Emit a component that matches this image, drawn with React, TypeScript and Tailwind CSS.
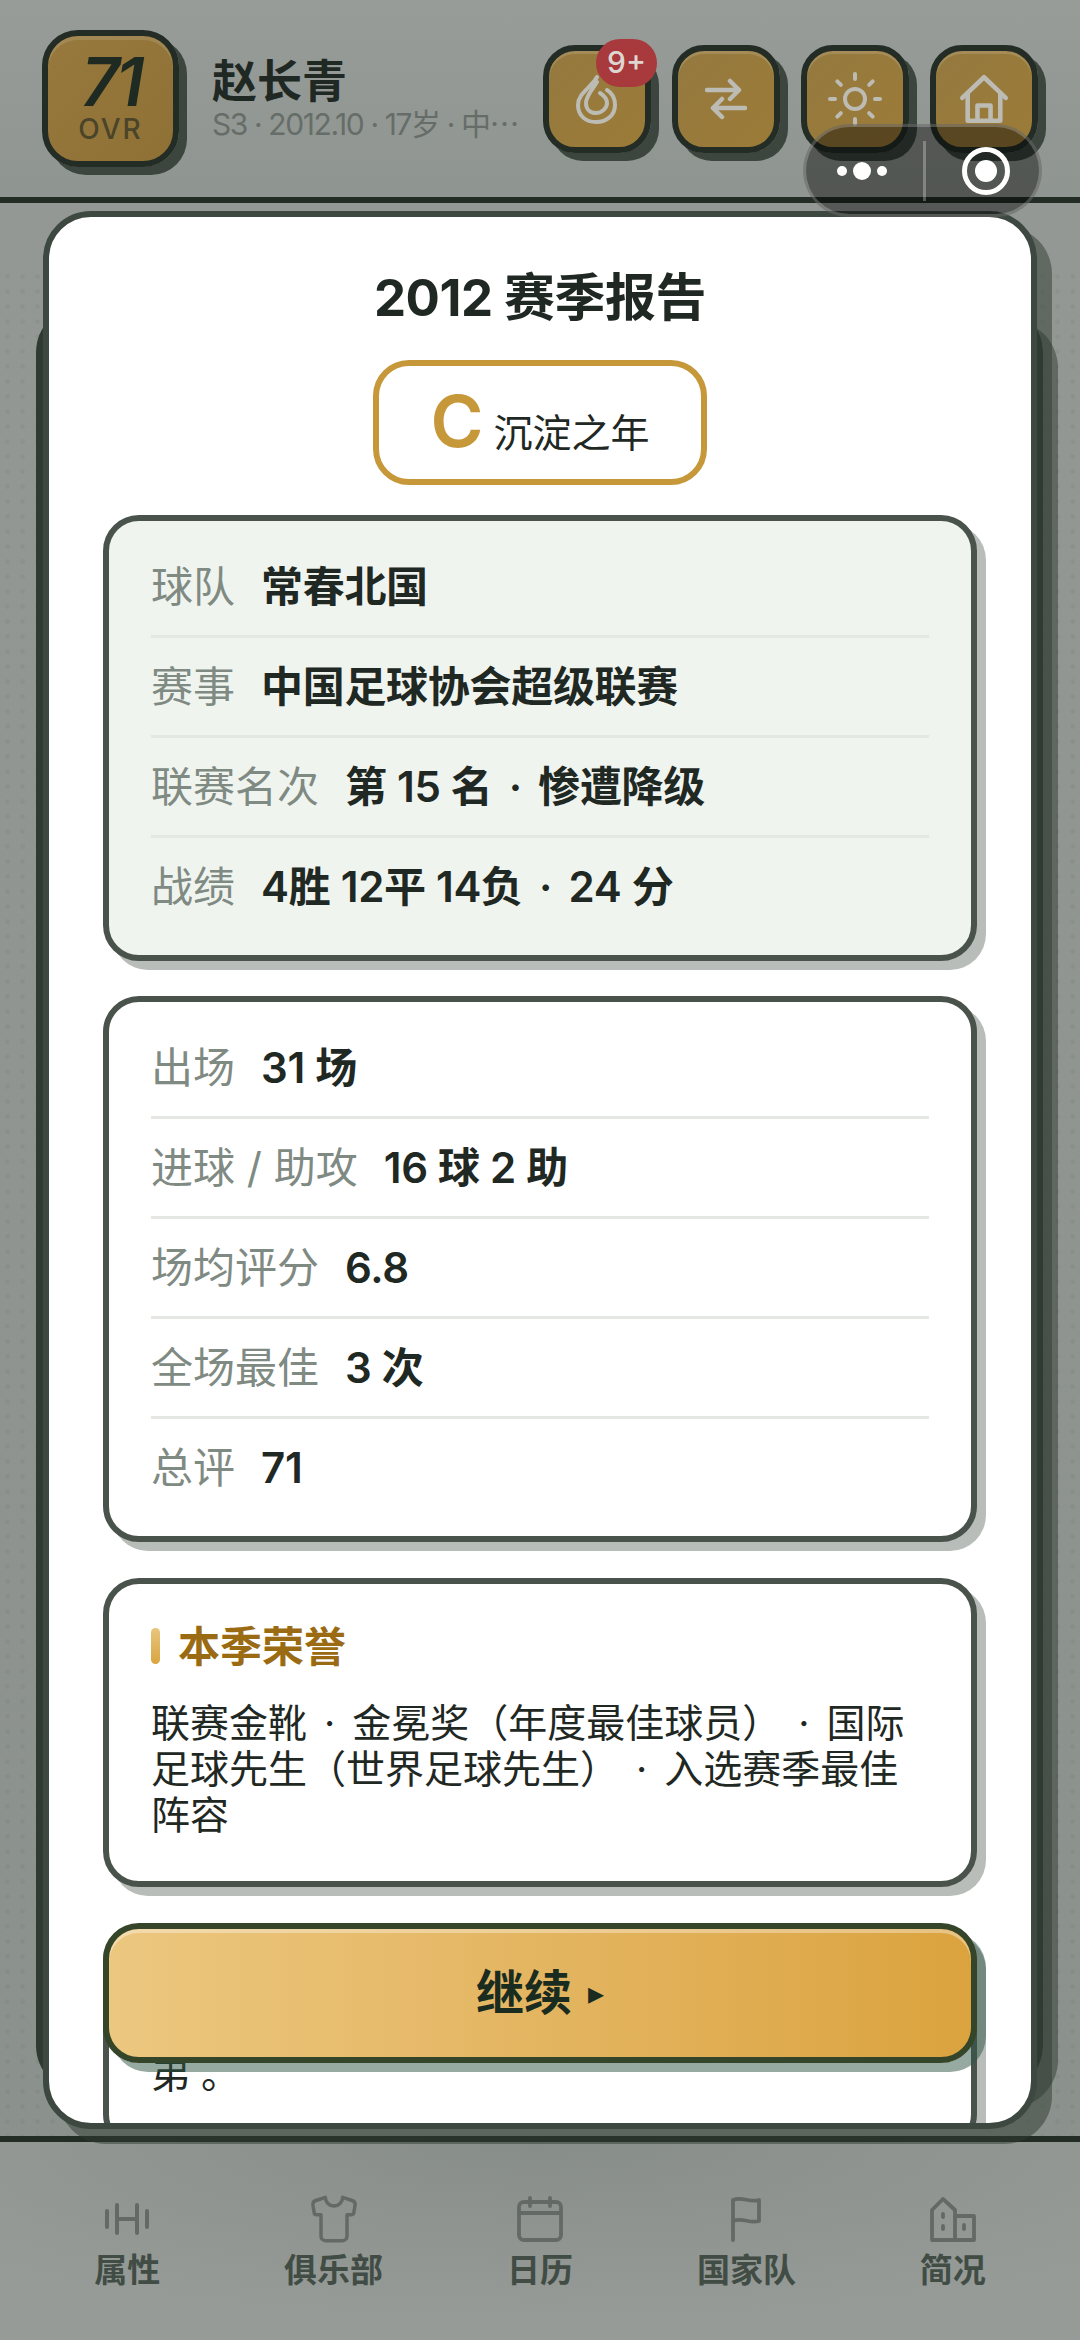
import React from "react";
import { Sun, Shirt } from "lucide-react";

const FONT = "font-['Inter','Noto_Sans_CJK_SC',sans-serif]";

function Dot() {
  return <span className="mx-[6px]">·</span>;
}

function Row({ label, value, last }: { label: string; value: React.ReactNode; last?: boolean }) {
  return (
    <div className={`flex items-center h-[100px] gap-[26px] ${last ? "pb-[3px]" : "border-b-[3px] border-[#e5e8e2]"}`}>
      <span className="text-[42px] text-[#7f8a83] whitespace-nowrap">{label}</span>
      <span className="text-[42px] font-semibold tracking-[-0.3px] text-[#1f2823] whitespace-nowrap">{value}</span>
    </div>
  );
}

function IconButton({ children, badge }: { children: React.ReactNode; badge?: string }) {
  return (
    <div className="relative w-[108px] h-[108px] rounded-[32px] border-[6px] border-[#232d25] bg-gradient-to-br from-[#94793f] to-[#9c7b37] shadow-[8px_8px_0_#3c463f,inset_0_3px_0_rgba(255,255,255,0.14)] flex items-center justify-center text-[#bcbcb4]">
      {children}
      {badge && (
        <span className="absolute left-[47px] top-[-12px] w-[61px] h-[48px] rounded-[24px] bg-[#a8393c] text-[#ddd6d2] text-[30px] font-medium flex items-center justify-center">
          {badge}
        </span>
      )}
    </div>
  );
}

function NavItem({ icon, label }: { icon: React.ReactNode; label: string }) {
  return (
    <div className="flex flex-col items-center">
      <div className="h-[48px] flex items-center justify-center text-[#636a65]">{icon}</div>
      <span className="mt-[4px] text-[33px] leading-[46px] font-bold text-[#414c45]">{label}</span>
    </div>
  );
}

export default function App() {
  return (
    <div className={`relative w-[1080px] h-[2340px] overflow-hidden bg-[#969b97] ${FONT}`}>
      <div className="flex flex-col h-full">
        {/* Header */}
        <header className="h-[203px] shrink-0 border-b-[6px] border-[#232d25] px-[42px] flex items-center bg-gradient-to-b from-[#979c98] to-[#8f9590]">
          <div className="w-[137px] h-[137px] rounded-[36px] border-[6px] border-[#232d25] bg-gradient-to-br from-[#97793d] to-[#8f7136] shadow-[8px_8px_0_#3c463f,inset_0_4px_0_rgba(255,255,255,0.12)] flex flex-col items-center justify-center text-[#1f2a22]">
            <span className="text-[67px] leading-[58px] font-semibold italic tracking-[-4px]">71</span>
            <span className="text-[28px] leading-[32px] mt-[2px] tracking-[2px] font-medium text-[#4a4429]">OVR</span>
          </div>
          <div className="ml-[33px] w-[320px] flex flex-col">
            <span className="text-[45px] leading-[54px] font-bold text-[#1f2823]">赵长青</span>
            <span className="text-[30px] leading-[38px] mt-[-6px] text-[#666d68] tracking-[-1.4px] whitespace-nowrap">
              S3 · 2012.10 · 17岁 · 中<span className="font-['Noto_Sans_CJK_SC',sans-serif] tracking-[0px]">…</span>
            </span>
          </div>
          <div className="ml-auto flex gap-[21px]">
            <IconButton badge="9+">
              <svg width="54" height="78" viewBox="0 0 54 78" fill="none" stroke="currentColor" strokeWidth="4" strokeLinecap="round">
                <path d="M27 17 C22 27 8 33 8 45 C8 56 16 62 26 62 C37 62 45 55 45 45 C45 39 42 33 37 30" />
                <path d="M27 22 C22 30 16 36 16 43 C16 49 20 53 26 53 C32 53 37 48 37 43 C37 38 33 35 30 33" />
              </svg>
            </IconButton>
            <IconButton>
              <svg width="42" height="42" viewBox="0 0 42 42" fill="none" stroke="currentColor" strokeWidth="4.5" strokeLinecap="round" strokeLinejoin="round">
                <path d="M2 12 H34 M25 3 L34 12 L25 21" />
                <path d="M40 30 H8 M17 21 L8 30 L17 39" />
              </svg>
            </IconButton>
            <IconButton>
              <Sun size={60} strokeWidth={1.6} />
            </IconButton>
            <IconButton>
              <svg width="50" height="50" viewBox="0 0 46 46" fill="none" stroke="currentColor" strokeWidth="4.2" strokeLinecap="round" strokeLinejoin="round">
                <path d="M3 22 L23 3 L43 22" />
                <path d="M8 18 V43 H38 V18" />
                <path d="M17 43 V29 H29 V43" />
              </svg>
            </IconButton>
          </div>
        </header>

        {/* Page area with a faint dot texture */}
        <main className="flex-1 flex flex-col pt-[66px] bg-gradient-to-b from-[#939894] to-[#8b918c]">
          <div className="flex-1 bg-[radial-gradient(rgba(60,70,64,0.07)_2px,transparent_2.5px)] bg-[length:15px_15px]" />
        </main>

        {/* Bottom nav */}
        <nav className="h-[204px] shrink-0 border-t-[6px] border-[#232d25] grid grid-cols-5 px-[24px] pt-[53px] bg-[#969b97] bg-[radial-gradient(ellipse_70%_90%_at_50%_0%,#878d88,#969b97)]">
          <NavItem
            label="属性"
            icon={
              <svg width="44" height="32" viewBox="0 0 44 32" fill="none" stroke="currentColor" strokeWidth="4" strokeLinecap="round">
                <path d="M2 8 V24 M12 2 V30 M32 2 V30 M42 8 V24 M12 16 H32" />
              </svg>
            }
          />
          <NavItem label="俱乐部" icon={<Shirt size={52} strokeWidth={1.6} />} />
          <NavItem
            label="日历"
            icon={
              <svg width="46" height="46" viewBox="0 0 46 46" fill="none" stroke="currentColor" strokeWidth="3.8" strokeLinecap="round">
                <rect x="2" y="6" width="42" height="38" rx="5" />
                <path d="M2 17 H44 M13 2 V10 M33 2 V10" />
              </svg>
            }
          />
          <NavItem
            label="国家队"
            icon={
              <svg width="32" height="46" viewBox="0 0 32 46" fill="none" stroke="currentColor" strokeWidth="3.8" strokeLinecap="round" strokeLinejoin="round">
                <path d="M3 44 V4 C12 0 20 7 29 4 V25 C20 28 12 21 3 25" />
              </svg>
            }
          />
          <NavItem
            label="简况"
            icon={
              <svg width="46" height="46" viewBox="0 0 46 46" fill="none" stroke="currentColor" strokeWidth="3.8" strokeLinecap="round" strokeLinejoin="round">
                <path d="M2 44 V14 L13 3 L25 14 V44 Z" />
                <path d="M25 20 H44 V44 H25" />
                <path d="M13 18 V21 M13 30 V33 M34 29 V33" />
              </svg>
            }
          />
        </nav>
      </div>

      {/* Modal behind */}
      <div className="absolute left-[36px] top-[305px] w-[1007px] h-[1788px] rounded-[48px] border-[7px] border-[#2f3a32] shadow-[15px_15px_0_rgba(47,58,50,0.5)]" />

      {/* Modal front */}
      <div className="absolute left-[43px] top-[211px] w-[994px] h-[1918px] rounded-[48px] border-[6px] border-[#3d4840] bg-white shadow-[15px_15px_0_rgba(47,58,50,0.5)]">
        <div className="relative w-full h-full rounded-[42px] overflow-hidden px-[54px] pt-[50px]">
          <h1 className="text-center text-[51px] leading-[62px] font-bold tracking-[-0.5px] text-[#1f2823]">2012 赛季报告</h1>
          <div className="mx-auto mt-[31px] w-[334px] h-[125px] rounded-[36px] border-[6px] border-[#c6983a] flex items-baseline justify-center gap-[10px] leading-[110px]">
            <span className="text-[72px] font-semibold text-[#c6983a]">C</span>
            <span className="text-[39px] text-[#1f2823]">沉淀之年</span>
          </div>

          <section className="mt-[30px] rounded-[36px] border-[6px] border-[#4a524c] bg-[#f0f4ef] px-[42px] py-[17px] shadow-[9px_9px_0_#b9bdb9]">
            <Row label="球队" value="常春北国" />
            <Row label="赛事" value="中国足球协会超级联赛" />
            <Row label="联赛名次" value={<>第 15 名 <Dot /> 惨遭降级</>} />
            <Row label="战绩" value={<>4胜 12平 14负 <Dot /> 24 分</>} last />
          </section>

          <section className="mt-[35px] rounded-[36px] border-[6px] border-[#4a524c] bg-white px-[42px] py-[17px] shadow-[9px_9px_0_#b9bdb9]">
            <Row label="出场" value="31 场" />
            <Row label="进球 / 助攻" value="16 球 2 助" />
            <Row label="场均评分" value="6.8" />
            <Row label="全场最佳" value="3 次" />
            <Row label="总评" value="71" last />
          </section>

          <section className="mt-[36px] rounded-[36px] border-[6px] border-[#4a524c] bg-white pl-[42px] pr-[46px] pt-[37px] pb-[43px] shadow-[9px_9px_0_#b9bdb9]">
            <div className="flex items-center gap-[18px] h-[50px]">
              <span className="w-[9px] h-[36px] rounded-full bg-gradient-to-b from-[#e8c67c] to-[#d9a53f]" />
              <span className="text-[42px] font-bold text-[#9a6b12]">本季荣誉</span>
            </div>
            <p className="mt-[29px] text-[39px] leading-[46px] text-[#1f2823] [text-spacing-trim:space-all]">
              联赛金靴 <Dot /> 金冕奖（年度最佳球员） <Dot /> 国际足球先生（世界足球先生） <Dot /> 入选赛季最佳阵容
            </p>
          </section>

          <section className="mt-[38px] h-[225px] rounded-[36px] border-[6px] border-[#4a524c] bg-white px-[42px] pt-[120px] shadow-[9px_9px_0_#b9bdb9]">
            <p className="text-[39px] leading-[46px] text-[#1f2823] [text-spacing-trim:space-all]">弟 。</p>
          </section>

          {/* Floating continue button */}
          <button className="absolute left-[54px] top-[1706px] w-[874px] h-[140px] rounded-[36px] border-[6px] border-[#35452a] bg-gradient-to-r from-[#ecc77f] to-[#dba33e] shadow-[9px_9px_0_rgba(45,85,70,0.5),inset_0_4px_0_rgba(255,255,255,0.35)] flex items-center justify-center gap-[16px] text-[#1a2c20]">
            <span className="text-[48px] font-bold">继续</span>
            <span className="text-[32px] leading-none font-['DejaVu_Sans',sans-serif]">▸</span>
          </button>
        </div>
      </div>

      {/* Mini-program capsule */}
      <div className="absolute left-[803px] top-[124px] w-[239px] h-[93px] rounded-full bg-[rgba(0,0,0,0.42)] border-[3px] border-[rgba(255,255,255,0.22)] flex items-center">
        <div className="w-[117px] pr-[6px] flex items-center justify-center gap-[6px]">
          <span className="w-[10px] h-[10px] rounded-full bg-white" />
          <span className="w-[18px] h-[18px] rounded-full bg-white" />
          <span className="w-[10px] h-[10px] rounded-full bg-white" />
        </div>
        <div className="w-[3px] h-[60px] bg-[rgba(255,255,255,0.28)]" />
        <div className="flex-1 pl-[6px] flex items-center justify-center">
          <div className="w-[48px] h-[48px] rounded-full border-[5px] border-white flex items-center justify-center">
            <span className="w-[22px] h-[22px] rounded-full bg-white" />
          </div>
        </div>
      </div>
    </div>
  );
}
